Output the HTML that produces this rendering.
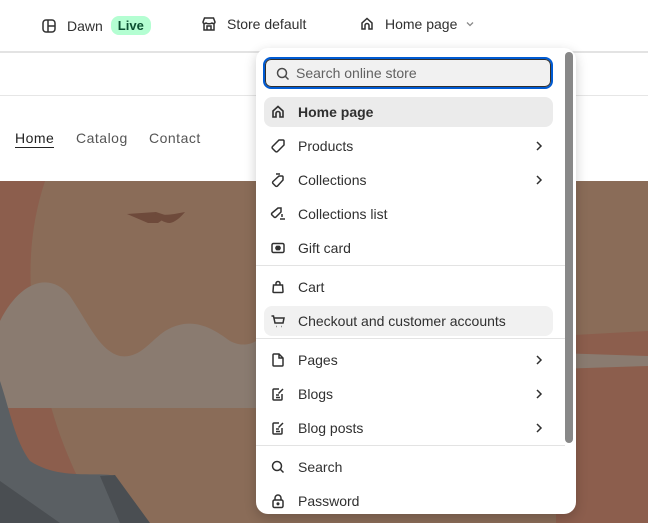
<!DOCTYPE html>
<html><head><meta charset="utf-8"><style>
*{margin:0;padding:0;box-sizing:border-box}
body{width:648px;height:523px;overflow:hidden;background:#fff;font-family:"Liberation Sans",sans-serif;position:relative;color:#303030}
.top{position:absolute;left:0;top:0;width:648px;height:53px;background:#fff;border-bottom:2px solid #e3e3e3}
.ti{position:absolute;top:16px;font-size:14px;color:#303030;display:flex;align-items:center}
.live{background:#b4fed2;color:#0c5132;border-radius:8px;padding:2px 7px;font-size:13px;margin-left:8px;font-weight:bold}
.line{position:absolute;left:0;top:95px;width:648px;height:1px;background:#e6e6e6}
.nav{position:absolute;top:130px;font-size:14px;color:#555;letter-spacing:.5px}
.hero{position:absolute;left:0;top:181px}
.menu{position:absolute;left:256px;top:48px;width:320px;height:466px;background:#fff;border-radius:12px;box-shadow:0 4px 12px rgba(0,0,0,.2)}
.search{position:absolute;left:7px;top:9px;width:290px;height:32px;border:2px solid #005bd3;border-radius:8px;background:#f1f1f1;box-shadow:inset 0 0 0 1px #303030}
.search span{position:absolute;left:31px;top:6px;font-size:14px;color:#616161}
.it{position:absolute;left:8px;width:289px;height:30px;border-radius:8px;font-size:14px;color:#303030}
.it span{position:absolute;left:34px;top:7px}
.it svg.ic{position:absolute;left:6px;top:7px}
.it svg.ch{position:absolute;right:8px;top:9px}
.div{position:absolute;left:0;width:309px;height:1px;background:#e3e3e3}
.sb{position:absolute;left:309px;top:4px;width:8px;height:391px;background:#888;border-radius:4px}
</style></head><body>
<div class="top">
 <div class="ti" style="left:41px"><svg width="16" height="16" viewBox="0 0 16 16" fill="none" stroke="#303030" stroke-width="1.5"><rect x="2" y="2" width="12" height="12" rx="3"/><path d="M7 2v12M7 8h7"/></svg><span style="margin-left:10px">Dawn</span><span class="live">Live</span></div>
 <div class="ti" style="left:201px"><svg width="16" height="16" viewBox="0 0 16 16" fill="none" stroke="#303030" stroke-width="1.5"><path d="M2 6l1.5-4h9L14 6c0 1.5-2 2-3 1-1 1-5 1-6 0-1 1-3 .5-3-1zM3 7v7h10V7M6 14v-4h4v4"/></svg><span style="margin-left:10px">Store default</span></div>
 <div class="ti" style="left:359px"><svg width="16" height="16" viewBox="0 0 16 16" fill="none" stroke="#303030" stroke-width="1.5"><path d="M3 13V7l5-4.5L13 7v6h-3v-3.5a2 2 0 0 0-4 0V13z"/></svg><span style="margin-left:10px">Home page</span><svg style="margin-left:8px" width="10" height="10" viewBox="0 0 10 10" fill="none" stroke="#8a8a8a" stroke-width="1.3"><path d="M2 3.5l3 3 3-3"/></svg></div>
</div>
<div class="line"></div>
<div class="nav" style="left:15px;color:#222;border-bottom:1px solid #222;padding-bottom:1px">Home</div>
<div class="nav" style="left:76px">Catalog</div>
<div class="nav" style="left:149px">Contact</div>
<svg class="hero" width="648" height="342" viewBox="0 0 648 342">
 <rect width="648" height="342" fill="#8a6c58"/>
 <path d="M0 0H45C25 60 28 120 40 170 50 250 80 300 100 342H0z" fill="#8c5e4d"/>
 <path d="M556 155 L648 150 V342 H556z" fill="#8c5e4d"/>
 <path d="M556 172 L648 175 V185 L556 188z" fill="#8a7b70"/>
 <path d="M0 140C20 100 50 90 70 115 90 145 100 170 120 175 140 178 150 160 165 150 190 135 210 145 230 160 245 168 256 160 256 160V227H0z" fill="#8a7b70"/>
 <path d="M127 33l29 -2 12 4-10 7-10 0z" fill="#6e4a3b"/>
 <path d="M155 33c10 2 20 0 30-2-5 6-10 10-15 11-6 0-12-4-15-9z" fill="#6e4a3b"/>
 <path d="M0 200C10 230 15 260 30 280 60 300 100 290 115 295L140 342H0z" fill="#5a5f63"/>
 <path d="M100 295 L115 294 L150 342 H120z" fill="#4a4e52"/>
 <path d="M0 300 L60 342 H0z" fill="#4a4e52"/>
</svg>
<div class="menu">
 <div class="search"><svg style="position:absolute;left:10px;top:7px" width="16" height="16" viewBox="0 0 16 16" fill="none" stroke="#4a4a4a" stroke-width="1.5"><circle cx="7" cy="7" r="4.5"/><path d="M10.5 10.5l3 3"/></svg><span>Search online store</span></div>
 <div class="it" style="top:49px;background:#ebebeb;font-weight:bold"><svg class="ic" width="16" height="16" viewBox="0 0 16 16" fill="none" stroke="#303030" stroke-width="1.6"><path d="M3 13V7l5-4.5L13 7v6h-3v-3.5a2 2 0 0 0-4 0V13z"/></svg><span>Home page</span></div>
 <div class="it" style="top:83px"><svg class="ic" width="16" height="16" viewBox="0 0 16 16" fill="none" stroke="#303030" stroke-width="1.5"><path d="M9 2h4a1 1 0 0 1 1 1v4L7.5 13.5a1.4 1.4 0 0 1-2 0l-3-3a1.4 1.4 0 0 1 0-2z"/></svg><span>Products</span><svg class="ch" width="12" height="12" viewBox="0 0 12 12" fill="none" stroke="#303030" stroke-width="1.5"><path d="M4 2l4 4-4 4"/></svg></div>
 <div class="it" style="top:117px"><svg class="ic" width="16" height="16" viewBox="0 0 16 16" fill="none" stroke="#303030" stroke-width="1.5"><path d="M9 4h3a1 1 0 0 1 1 1v3l-5.5 6a1.4 1.4 0 0 1-2 0l-2.5-2.5a1.4 1.4 0 0 1 0-2zM6 2h4"/></svg><span>Collections</span><svg class="ch" width="12" height="12" viewBox="0 0 12 12" fill="none" stroke="#303030" stroke-width="1.5"><path d="M4 2l4 4-4 4"/></svg></div>
 <div class="it" style="top:151px"><svg class="ic" width="16" height="16" viewBox="0 0 16 16" fill="none" stroke="#303030" stroke-width="1.5"><path d="M8 2h3v4l-5 5a1.3 1.3 0 0 1-2 0l-2-2a1.3 1.3 0 0 1 0-2zM12 8v3M10 13h5"/></svg><span>Collections list</span></div>
 <div class="it" style="top:185px"><svg class="ic" width="16" height="16" viewBox="0 0 16 16" fill="none" stroke="#303030" stroke-width="1.5"><rect x="2" y="3.5" width="12" height="9" rx="1.5"/><path d="M5 8h6M8 5.5v5M6 6l4 4M10 6l-4 4"/></svg><span>Gift card</span></div>
 <div class="div" style="top:217px"></div>
 <div class="it" style="top:224px"><svg class="ic" width="16" height="16" viewBox="0 0 16 16" fill="none" stroke="#303030" stroke-width="1.5"><path d="M3.5 6h9l.5 6.5a1 1 0 0 1-1 1H4a1 1 0 0 1-1-1zM6 6V4.5a2 2 0 0 1 4 0V6"/></svg><span>Cart</span></div>
 <div class="it" style="top:258px;background:#f1f1f1"><svg class="ic" width="16" height="16" viewBox="0 0 16 16" fill="none" stroke="#303030" stroke-width="1.5"><path d="M1.5 3h2l1.5 7h8l1-5H4M6 13.5h.5M11 13.5h.5"/></svg><span>Checkout and customer accounts</span></div>
 <div class="div" style="top:290px"></div>
 <div class="it" style="top:297px"><svg class="ic" width="16" height="16" viewBox="0 0 16 16" fill="none" stroke="#303030" stroke-width="1.5"><path d="M4 2h5l4 4v7a1 1 0 0 1-1 1H4a1 1 0 0 1-1-1V3a1 1 0 0 1 1-1zM9 2v4h4"/></svg><span>Pages</span><svg class="ch" width="12" height="12" viewBox="0 0 12 12" fill="none" stroke="#303030" stroke-width="1.5"><path d="M4 2l4 4-4 4"/></svg></div>
 <div class="it" style="top:331px"><svg class="ic" width="16" height="16" viewBox="0 0 16 16" fill="none" stroke="#303030" stroke-width="1.5"><path d="M9 3H4a1 1 0 0 0-1 1v9a1 1 0 0 0 1 1h7a1 1 0 0 0 1-1V8M6 9h3M6 11.5h4M8.5 7.5L13 3"/></svg><span>Blogs</span><svg class="ch" width="12" height="12" viewBox="0 0 12 12" fill="none" stroke="#303030" stroke-width="1.5"><path d="M4 2l4 4-4 4"/></svg></div>
 <div class="it" style="top:365px"><svg class="ic" width="16" height="16" viewBox="0 0 16 16" fill="none" stroke="#303030" stroke-width="1.5"><path d="M9 3H4a1 1 0 0 0-1 1v9a1 1 0 0 0 1 1h7a1 1 0 0 0 1-1V8M6 9h3M6 11.5h4M8.5 7.5L13 3"/></svg><span>Blog posts</span><svg class="ch" width="12" height="12" viewBox="0 0 12 12" fill="none" stroke="#303030" stroke-width="1.5"><path d="M4 2l4 4-4 4"/></svg></div>
 <div class="div" style="top:397px"></div>
 <div class="it" style="top:404px"><svg class="ic" width="16" height="16" viewBox="0 0 16 16" fill="none" stroke="#303030" stroke-width="1.5"><circle cx="7" cy="7" r="4.5"/><path d="M10.5 10.5l3 3"/></svg><span>Search</span></div>
 <div class="it" style="top:438px"><svg class="ic" width="16" height="16" viewBox="0 0 16 16" fill="none" stroke="#303030" stroke-width="1.5"><rect x="3" y="7" width="10" height="7.5" rx="1.5"/><path d="M5 7V5a3 3 0 0 1 6 0v2"/><circle cx="8" cy="10.8" r=".8" fill="#303030"/></svg><span>Password</span></div>
 <div class="sb"></div>
</div>
</body></html>
